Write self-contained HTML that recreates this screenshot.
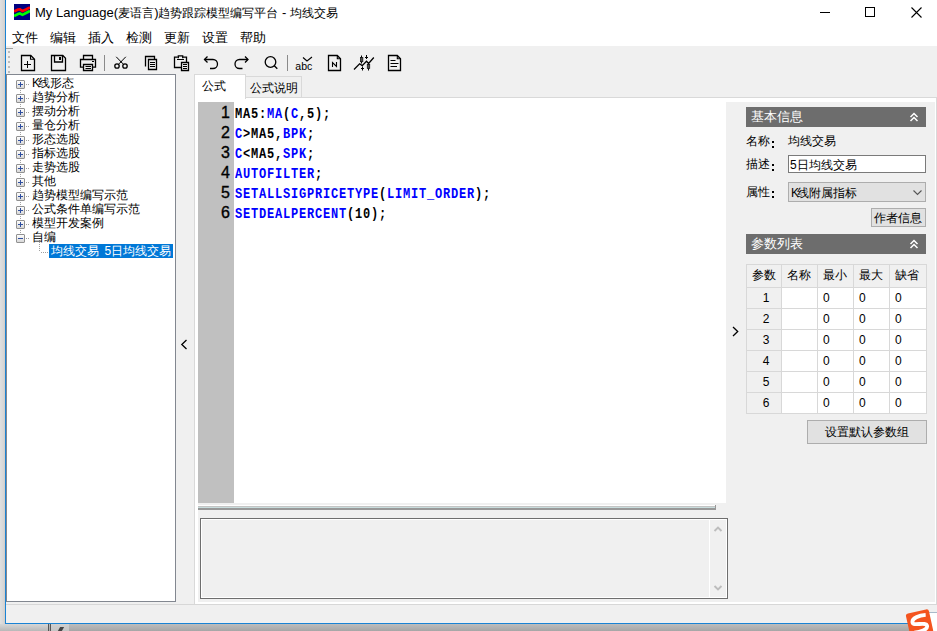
<!DOCTYPE html>
<html><head><meta charset="utf-8">
<style>
*{box-sizing:border-box;margin:0;padding:0}
html,body{width:937px;height:631px;overflow:hidden;background:#a8a8a8;font-family:"Liberation Sans",sans-serif;font-size:12px;color:#000}
.a{position:absolute}
.mi{position:absolute;top:29px;font-size:13px;line-height:17px;white-space:nowrap}
.ti{position:absolute;left:32px;font-size:12px;line-height:14px;white-space:nowrap}
.box{position:absolute;left:16px;width:9px;height:9px;border:1px solid #919191;background:linear-gradient(#fdfdfd,#d8d8d8);border-radius:1px}
.box:before{content:"";position:absolute;left:1px;top:3px;width:5px;height:1px;background:#2f4fa0}
.box.p:after{content:"";position:absolute;left:3px;top:1px;width:1px;height:5px;background:#2f4fa0}
.ln{position:absolute;left:198px;width:32px;text-align:right;font-size:16px;line-height:20px;-webkit-text-stroke:0.35px #000}
.cl{position:absolute;left:235px;font-family:"Liberation Mono",monospace;font-weight:bold;font-size:15px;letter-spacing:1px;line-height:20px;white-space:pre;transform:scaleX(0.8);transform-origin:0 0}
.k{color:#0000ff}
.hdr{position:absolute;left:746px;width:180px;height:20px;background:#6d6d6d;color:#fff;font-size:12.5px;line-height:20px;padding-left:5px}
.lbl{position:absolute;left:746px;font-size:12px;line-height:14px;white-space:nowrap}
.td{position:absolute;font-size:12px;line-height:14px;white-space:nowrap}
</style></head><body>
<div class="a" style="left:0;top:0;width:5px;height:624px;background:linear-gradient(to right,#e0e0e0,#d2d2d2)"></div>
<div class="a" style="left:4px;top:0;width:1px;height:624px;background:#d6cfc9"></div>
<div class="a" style="left:0;top:624px;width:937px;height:7px;background:linear-gradient(#bdbdbd,#a6a6a6)"></div>
<div class="a" style="left:0;top:624px;width:48px;height:7px;background:linear-gradient(#d6d6d6,#b8b8b8)"></div>
<div class="a" style="left:48px;top:624px;width:1px;height:7px;background:#555"></div>
<div class="a" style="left:50px;top:624px;width:1px;height:7px;background:#555"></div>
<div class="a" style="left:51px;top:624px;width:18px;height:7px;background:linear-gradient(#d0d0d0,#c4c4c4)"></div>
<div class="a" style="left:59px;top:627px;width:4px;height:4px;background:#444;transform:skewX(-30deg)"></div>
<div class="a" style="left:5px;top:0;width:932px;height:624px;background:#f0f0f0;border-left:1px solid #1a83d4;border-bottom:1px solid #1a83d4"></div>
<div class="a" style="left:6px;top:0;width:931px;height:46px;background:#fff"></div>
<svg class="a" style="left:14px;top:4px" width="16" height="16" viewBox="0 0 16 16">
<rect width="16" height="16" fill="#000080"/>
<polyline points="0,7.5 4,5.5 6,5.3 8.5,7 12,5.5 16,3.3" fill="none" stroke="#ff0000" stroke-width="2.6"/>
<polyline points="0,12 4,10 6,9.5 8.5,10.8 12,9 16,7" fill="none" stroke="#00ff00" stroke-width="2.6"/>
</svg>
<div class="a" style="left:35px;top:5px;font-size:13px;line-height:16px;white-space:nowrap">My Language(<span style="font-size:12px">麦语言</span>)<span style="font-size:12px">趋势跟踪模型编写平台</span> - <span style="font-size:12px">均线交易</span></div>
<div class="a" style="left:820px;top:12px;width:10px;height:1px;background:#000"></div>
<div class="a" style="left:865px;top:7px;width:10px;height:10px;border:1px solid #000"></div>
<svg class="a" style="left:911px;top:7px" width="11" height="11" viewBox="0 0 11 11"><path d="M0.5 0.5L10.5 10.5M10.5 0.5L0.5 10.5" stroke="#000" stroke-width="1.1"/></svg>
<div class="mi" style="left:12px">文件</div>
<div class="mi" style="left:50px">编辑</div>
<div class="mi" style="left:88px">插入</div>
<div class="mi" style="left:126px">检测</div>
<div class="mi" style="left:164px">更新</div>
<div class="mi" style="left:202px">设置</div>
<div class="mi" style="left:240px">帮助</div>
<div class="a" style="left:6px;top:48px;width:7px;height:1px;background:#a0a0a0"></div>
<svg class="a" style="left:0;top:46px" width="420" height="28" viewBox="0 46 420 28">
<g fill="#bcbcbc"><rect x="8" y="51" width="2" height="2"/><rect x="8" y="56" width="2" height="2"/><rect x="8" y="61" width="2" height="2"/><rect x="8" y="66" width="2" height="2"/><rect x="8" y="71" width="2" height="2"/></g>
<g fill="none" stroke="#000" stroke-width="1.3" stroke-linejoin="miter">
<path d="M21.5 55.5H30.8L34.5 59.2V70.5H21.5Z"/><path d="M30.5 55.8V59.3H34.2" stroke-width="1.1"/>
<path d="M51.5 55.5H62.8L65.5 58.2V70.5H51.5Z"/><path d="M54.5 55.8V62H62.5V55.8"/>
<path d="M83.5 59.3V55.5H92.5V59.3"/><path d="M83.5 67.2H80.5V59.5H95.5V67.2H92.5"/><path d="M83.5 64.5H92.5V70.5H83.5Z"/>
<circle cx="117" cy="66" r="2.2"/><circle cx="125" cy="66" r="2.2"/>
<path d="M145.5 66.5V56.5H154.5V59.2"/><path d="M148.5 59.5H156.5V69.5H148.5Z"/>
<path d="M177.8 57.2H174.5V67.5H181M183 57.2H186.5V62.5"/><path d="M178.3 58.2V55.8H182.7V58.2"/><path d="M181.5 62.5H188.5V70.5H181.5Z"/>
<path d="M207.5 56.5L204.5 59.5L207.5 62.5"/><path d="M204.5 59.5H213A4.5 4.5 0 0 1 213 68.5H210"/>
<path d="M245 56.5L248 59.5L245 62.5"/><path d="M248 59.5H239.5A4.5 4.5 0 0 0 239.5 68.5H242.5"/>
<circle cx="270.5" cy="62" r="5.3"/><path d="M274.3 65.8L277.3 68.8"/>
<path d="M328.5 55.5H337.3L340.5 58.7V70.5H328.5Z"/><path d="M337.3 55.8V58.8H340.2" stroke-width="1.1"/>
<path d="M388.5 55.5H397.3L400.5 58.7V70.5H388.5Z"/><path d="M397.3 55.8V58.8H400.2" stroke-width="1.1"/>
<path d="M354 69.5L359.6 63.8L362.2 65.6L366.5 61.2L368.6 63.5L373.8 57.5"/>
</g>
<g fill="none" stroke="#000" stroke-width="1">
<path d="M27.5 61V68M24 64.5H31"/>
<path d="M85.5 66.5H91M85.5 68.5H91"/>
<path d="M118.3 64.5L125.8 56.8M123.7 64.5L116.2 56.8"/>
<path d="M150 62.5H155M150 64.5H155M150 66.5H155"/>
<path d="M177 59.5H184"/><path d="M183 64.5H187M183 66.5H187M183 68.5H187"/>
<path d="M390.5 60.5H395.5M390.5 63.5H398.5M390.5 66.5H397"/>
<path d="M332.5 67V62.5L336.5 66.5V62" stroke-width="1.1"/>
</g>
<g fill="#000"><rect x="59" y="57" width="2" height="3"/><rect x="92" y="61" width="2" height="1"/><rect x="120.3" y="61.2" width="1.5" height="1.5"/></g>
<rect x="104" y="55" width="1" height="16" fill="#8a8a8a"/>
<rect x="287" y="55" width="1" height="16" fill="#8a8a8a"/>
<text x="295.3" y="69.6" font-family="Liberation Sans" font-size="11" fill="#000" textLength="17" lengthAdjust="spacingAndGlyphs">abc</text>
<path d="M303 57.5L307 61L312 57" fill="none" stroke="#000" stroke-width="1.1"/>
<g stroke="#000" stroke-width="1" fill="none"><path d="M361.5 55.5V63.5M368.5 62.5V70.5M366.5 55V59M365 57.5H368M362.5 66.5V70.5M361 68.5H364"/></g>
<g fill="#505050" stroke="#000" stroke-width="0.6"><rect x="360.3" y="57.5" width="2.6" height="4.3"/><rect x="367.2" y="64.3" width="2.6" height="4.3"/></g>
</svg>
<div class="a" style="left:6px;top:74px;width:170px;height:528px;background:#fff;border:1px solid #828790"></div>
<svg class="a" style="left:0;top:74px" width="176" height="200" viewBox="0 74 176 200"><g fill="#a0a0a0"><rect x="26" y="84" width="1" height="1"/><rect x="28" y="84" width="1" height="1"/><rect x="20" y="90" width="1" height="1"/><rect x="20" y="92" width="1" height="1"/><rect x="20" y="94" width="1" height="1"/><rect x="20" y="96" width="1" height="1"/><rect x="26" y="98" width="1" height="1"/><rect x="28" y="98" width="1" height="1"/><rect x="20" y="104" width="1" height="1"/><rect x="20" y="106" width="1" height="1"/><rect x="20" y="108" width="1" height="1"/><rect x="20" y="110" width="1" height="1"/><rect x="26" y="112" width="1" height="1"/><rect x="28" y="112" width="1" height="1"/><rect x="20" y="118" width="1" height="1"/><rect x="20" y="120" width="1" height="1"/><rect x="20" y="122" width="1" height="1"/><rect x="20" y="124" width="1" height="1"/><rect x="26" y="126" width="1" height="1"/><rect x="28" y="126" width="1" height="1"/><rect x="20" y="132" width="1" height="1"/><rect x="20" y="134" width="1" height="1"/><rect x="20" y="136" width="1" height="1"/><rect x="20" y="138" width="1" height="1"/><rect x="26" y="140" width="1" height="1"/><rect x="28" y="140" width="1" height="1"/><rect x="20" y="146" width="1" height="1"/><rect x="20" y="148" width="1" height="1"/><rect x="20" y="150" width="1" height="1"/><rect x="20" y="152" width="1" height="1"/><rect x="26" y="154" width="1" height="1"/><rect x="28" y="154" width="1" height="1"/><rect x="20" y="160" width="1" height="1"/><rect x="20" y="162" width="1" height="1"/><rect x="20" y="164" width="1" height="1"/><rect x="20" y="166" width="1" height="1"/><rect x="26" y="168" width="1" height="1"/><rect x="28" y="168" width="1" height="1"/><rect x="20" y="174" width="1" height="1"/><rect x="20" y="176" width="1" height="1"/><rect x="20" y="178" width="1" height="1"/><rect x="20" y="180" width="1" height="1"/><rect x="26" y="182" width="1" height="1"/><rect x="28" y="182" width="1" height="1"/><rect x="20" y="188" width="1" height="1"/><rect x="20" y="190" width="1" height="1"/><rect x="20" y="192" width="1" height="1"/><rect x="20" y="194" width="1" height="1"/><rect x="26" y="196" width="1" height="1"/><rect x="28" y="196" width="1" height="1"/><rect x="20" y="202" width="1" height="1"/><rect x="20" y="204" width="1" height="1"/><rect x="20" y="206" width="1" height="1"/><rect x="20" y="208" width="1" height="1"/><rect x="26" y="210" width="1" height="1"/><rect x="28" y="210" width="1" height="1"/><rect x="20" y="216" width="1" height="1"/><rect x="20" y="218" width="1" height="1"/><rect x="20" y="220" width="1" height="1"/><rect x="20" y="222" width="1" height="1"/><rect x="26" y="224" width="1" height="1"/><rect x="28" y="224" width="1" height="1"/><rect x="20" y="230" width="1" height="1"/><rect x="20" y="232" width="1" height="1"/><rect x="20" y="234" width="1" height="1"/><rect x="20" y="236" width="1" height="1"/><rect x="26" y="238" width="1" height="1"/><rect x="28" y="238" width="1" height="1"/><rect x="39" y="238" width="1" height="1"/><rect x="39" y="240" width="1" height="1"/><rect x="39" y="242" width="1" height="1"/><rect x="39" y="244" width="1" height="1"/><rect x="39" y="246" width="1" height="1"/><rect x="39" y="248" width="1" height="1"/><rect x="39" y="250" width="1" height="1"/><rect x="41" y="252" width="1" height="1"/><rect x="43" y="252" width="1" height="1"/><rect x="45" y="252" width="1" height="1"/><rect x="47" y="252" width="1" height="1"/></g></svg>
<div class="box p" style="top:80px"></div>
<div class="ti" style="top:76px"><span style="letter-spacing:-2px">K</span>线形态</div>
<div class="box p" style="top:94px"></div>
<div class="ti" style="top:90px">趋势分析</div>
<div class="box p" style="top:108px"></div>
<div class="ti" style="top:104px">摆动分析</div>
<div class="box p" style="top:122px"></div>
<div class="ti" style="top:118px">量仓分析</div>
<div class="box p" style="top:136px"></div>
<div class="ti" style="top:132px">形态选股</div>
<div class="box p" style="top:150px"></div>
<div class="ti" style="top:146px">指标选股</div>
<div class="box p" style="top:164px"></div>
<div class="ti" style="top:160px">走势选股</div>
<div class="box p" style="top:178px"></div>
<div class="ti" style="top:174px">其他</div>
<div class="box p" style="top:192px"></div>
<div class="ti" style="top:188px">趋势模型编写示范</div>
<div class="box p" style="top:206px"></div>
<div class="ti" style="top:202px">公式条件单编写示范</div>
<div class="box p" style="top:220px"></div>
<div class="ti" style="top:216px">模型开发案例</div>
<div class="box" style="top:234px"></div>
<div class="ti" style="top:230px">自编</div>
<div class="a" style="left:49px;top:244px;width:124px;height:14px;background:#0078d7"></div>
<div class="ti" style="left:51px;top:244px;color:#fff">均线交易<span style="display:inline-block;width:5.5px"></span>5日均线交易</div>
<svg class="a" style="left:180px;top:339px" width="9" height="12" viewBox="0 0 9 12"><path d="M6.5 1L1.8 5.5L6.5 10" fill="none" stroke="#000" stroke-width="1.3"/></svg>
<div class="a" style="left:194px;top:97px;width:743px;height:508px;background:#fff;border:1px solid #d9d9d9"></div>
<div class="a" style="left:245px;top:76px;width:57px;height:22px;background:#f0f0f0;border:1px solid #d9d9d9;border-left:none"></div>
<div class="a" style="left:194px;top:74px;width:52px;height:25px;background:#fff;border:1px solid #d9d9d9;border-bottom:none"></div>
<div class="a" style="left:202px;top:78px;font-size:12px;line-height:16px">公式</div>
<div class="a" style="left:250px;top:80px;font-size:12px;line-height:16px">公式说明</div>
<div class="a" style="left:198px;top:503px;width:737px;height:99px;background:#f0f0f0"></div>
<div class="a" style="left:726px;top:102px;width:209px;height:500px;background:#f0f0f0"></div>
<div class="a" style="left:198px;top:102px;width:36px;height:401px;background:#c0c0c0"></div>
<div class="ln" style="top:103px">1</div>
<div class="ln" style="top:123px">2</div>
<div class="ln" style="top:143px">3</div>
<div class="ln" style="top:163px">4</div>
<div class="ln" style="top:183px">5</div>
<div class="ln" style="top:203px">6</div>
<div class="cl" style="top:105px">MA5:<span class="k">MA</span>(<span class="k">C</span>,5);</div>
<div class="cl" style="top:125px"><span class="k">C</span>&gt;MA5,<span class="k">BPK</span>;</div>
<div class="cl" style="top:145px"><span class="k">C</span>&lt;MA5,<span class="k">SPK</span>;</div>
<div class="cl" style="top:165px"><span class="k">AUTOFILTER</span>;</div>
<div class="cl" style="top:185px"><span class="k">SETALLSIGPRICETYPE</span>(<span class="k">LIMIT_ORDER</span>);</div>
<div class="cl" style="top:205px"><span class="k">SETDEALPERCENT</span>(10);</div>
<svg class="a" style="left:731px;top:326px" width="9" height="12" viewBox="0 0 9 12"><path d="M2 1L6.7 5.5L2 10" fill="none" stroke="#000" stroke-width="1.3"/></svg>
<div class="a" style="left:198px;top:505px;width:518px;height:1px;background:#fff"></div>
<div class="a" style="left:198px;top:506px;width:518px;height:1px;background:#c4c4c4"></div>
<div class="a" style="left:198px;top:507px;width:517px;height:1px;background:#c8dcdc"></div>
<div class="a" style="left:198px;top:508px;width:518px;height:2px;background:#989898"></div>
<div class="a" style="left:715px;top:505px;width:1px;height:5px;background:#989898"></div>
<div class="a" style="left:200px;top:518px;width:528px;height:81px;background:#f0f0f0;border:1px solid #6e6e6e"></div>
<div class="a" style="left:201px;top:519px;width:526px;height:79px;border:1px solid #fff"></div>
<div class="a" style="left:709px;top:519px;width:1px;height:79px;background:#fff"></div>
<svg class="a" style="left:710px;top:520px" width="16" height="76" viewBox="0 0 16 76"><path d="M4.5 11L8 7.5L11.5 11M4.5 66L8 69.5L11.5 66" fill="none" stroke="#bdbdbd" stroke-width="1.9"/></svg>
<div class="hdr" style="top:107px">基本信息</div>
<div class="hdr" style="top:234px">参数列表</div>
<svg class="a" style="left:908px;top:112px" width="12" height="10" viewBox="0 0 12 10"><path d="M2.5 5L6 1.5L9.5 5M2.5 9L6 5.5L9.5 9" fill="none" stroke="#fff" stroke-width="1.5"/></svg>
<svg class="a" style="left:908px;top:239px" width="12" height="10" viewBox="0 0 12 10"><path d="M2.5 5L6 1.5L9.5 5M2.5 9L6 5.5L9.5 9" fill="none" stroke="#fff" stroke-width="1.5"/></svg>
<div class="lbl" style="top:134px">名称</div>
<div class="a" style="left:772px;top:141px;width:2px;height:2px;background:#000;box-shadow:0 5px 0 #000"></div>
<div class="a" style="left:772px;top:164px;width:2px;height:2px;background:#000;box-shadow:0 5px 0 #000"></div>
<div class="a" style="left:772px;top:191px;width:2px;height:2px;background:#000;box-shadow:0 5px 0 #000"></div>
<div class="lbl" style="left:788px;top:134px">均线交易</div>
<div class="lbl" style="top:157px">描述</div>
<div class="a" style="left:788px;top:155px;width:138px;height:18px;background:#fff;border:1px solid #7a7a7a"></div>
<div class="lbl" style="left:790px;top:158px">5日均线交易</div>
<div class="lbl" style="top:185px">属性</div>
<div class="a" style="left:788px;top:182px;width:138px;height:20px;background:#e1e1e1;border:1px solid #adadad"></div>
<div class="lbl" style="left:791px;top:186px"><span style="letter-spacing:-2px">K</span>线附属指标</div>
<svg class="a" style="left:911.5px;top:189px" width="12" height="8" viewBox="0 0 12 8"><path d="M1.5 1.5L5.5 5.5L9.5 1.5" fill="none" stroke="#555" stroke-width="1.1"/></svg>
<div class="a" style="left:871px;top:208px;width:55px;height:19px;background:#e1e1e1;border:1px solid #adadad"></div>
<div class="lbl" style="left:874px;top:211px">作者信息</div>
<div class="a" style="left:746px;top:264px;width:181px;height:150px;background:#d8d8d8"></div>
<div class="a" style="left:747px;top:265px;width:34px;height:22px;background:#f0f0f0"></div>
<div class="a" style="left:782px;top:265px;width:35px;height:22px;background:#f0f0f0"></div>
<div class="a" style="left:818px;top:265px;width:35px;height:22px;background:#f0f0f0"></div>
<div class="a" style="left:854px;top:265px;width:35px;height:22px;background:#f0f0f0"></div>
<div class="a" style="left:890px;top:265px;width:36px;height:22px;background:#f0f0f0"></div>
<div class="a" style="left:747px;top:288px;width:34px;height:20px;background:#f0f0f0"></div>
<div class="a" style="left:782px;top:288px;width:35px;height:20px;background:#fff"></div>
<div class="a" style="left:818px;top:288px;width:35px;height:20px;background:#fff"></div>
<div class="a" style="left:854px;top:288px;width:35px;height:20px;background:#fff"></div>
<div class="a" style="left:890px;top:288px;width:36px;height:20px;background:#fff"></div>
<div class="a" style="left:747px;top:309px;width:34px;height:20px;background:#f0f0f0"></div>
<div class="a" style="left:782px;top:309px;width:35px;height:20px;background:#fff"></div>
<div class="a" style="left:818px;top:309px;width:35px;height:20px;background:#fff"></div>
<div class="a" style="left:854px;top:309px;width:35px;height:20px;background:#fff"></div>
<div class="a" style="left:890px;top:309px;width:36px;height:20px;background:#fff"></div>
<div class="a" style="left:747px;top:330px;width:34px;height:20px;background:#f0f0f0"></div>
<div class="a" style="left:782px;top:330px;width:35px;height:20px;background:#fff"></div>
<div class="a" style="left:818px;top:330px;width:35px;height:20px;background:#fff"></div>
<div class="a" style="left:854px;top:330px;width:35px;height:20px;background:#fff"></div>
<div class="a" style="left:890px;top:330px;width:36px;height:20px;background:#fff"></div>
<div class="a" style="left:747px;top:351px;width:34px;height:20px;background:#f0f0f0"></div>
<div class="a" style="left:782px;top:351px;width:35px;height:20px;background:#fff"></div>
<div class="a" style="left:818px;top:351px;width:35px;height:20px;background:#fff"></div>
<div class="a" style="left:854px;top:351px;width:35px;height:20px;background:#fff"></div>
<div class="a" style="left:890px;top:351px;width:36px;height:20px;background:#fff"></div>
<div class="a" style="left:747px;top:372px;width:34px;height:20px;background:#f0f0f0"></div>
<div class="a" style="left:782px;top:372px;width:35px;height:20px;background:#fff"></div>
<div class="a" style="left:818px;top:372px;width:35px;height:20px;background:#fff"></div>
<div class="a" style="left:854px;top:372px;width:35px;height:20px;background:#fff"></div>
<div class="a" style="left:890px;top:372px;width:36px;height:20px;background:#fff"></div>
<div class="a" style="left:747px;top:393px;width:34px;height:20px;background:#f0f0f0"></div>
<div class="a" style="left:782px;top:393px;width:35px;height:20px;background:#fff"></div>
<div class="a" style="left:818px;top:393px;width:35px;height:20px;background:#fff"></div>
<div class="a" style="left:854px;top:393px;width:35px;height:20px;background:#fff"></div>
<div class="a" style="left:890px;top:393px;width:36px;height:20px;background:#fff"></div>
<div class="td" style="left:752px;top:268px">参数</div>
<div class="td" style="left:787px;top:268px">名称</div>
<div class="td" style="left:823px;top:268px">最小</div>
<div class="td" style="left:859px;top:268px">最大</div>
<div class="td" style="left:895px;top:268px">缺省</div>
<div class="td" style="left:762px;top:291px;width:8px;text-align:center">1</div>
<div class="td" style="left:823px;top:291px">0</div>
<div class="td" style="left:859px;top:291px">0</div>
<div class="td" style="left:895px;top:291px">0</div>
<div class="td" style="left:762px;top:312px;width:8px;text-align:center">2</div>
<div class="td" style="left:823px;top:312px">0</div>
<div class="td" style="left:859px;top:312px">0</div>
<div class="td" style="left:895px;top:312px">0</div>
<div class="td" style="left:762px;top:333px;width:8px;text-align:center">3</div>
<div class="td" style="left:823px;top:333px">0</div>
<div class="td" style="left:859px;top:333px">0</div>
<div class="td" style="left:895px;top:333px">0</div>
<div class="td" style="left:762px;top:354px;width:8px;text-align:center">4</div>
<div class="td" style="left:823px;top:354px">0</div>
<div class="td" style="left:859px;top:354px">0</div>
<div class="td" style="left:895px;top:354px">0</div>
<div class="td" style="left:762px;top:375px;width:8px;text-align:center">5</div>
<div class="td" style="left:823px;top:375px">0</div>
<div class="td" style="left:859px;top:375px">0</div>
<div class="td" style="left:895px;top:375px">0</div>
<div class="td" style="left:762px;top:396px;width:8px;text-align:center">6</div>
<div class="td" style="left:823px;top:396px">0</div>
<div class="td" style="left:859px;top:396px">0</div>
<div class="td" style="left:895px;top:396px">0</div>
<div class="a" style="left:807px;top:420px;width:120px;height:24px;background:#e1e1e1;border:1px solid #adadad"></div>
<div class="lbl" style="left:825px;top:425px">设置默认参数组</div>
<div class="a" style="left:6px;top:604px;width:931px;height:1px;background:#d7d7d7"></div>
<div class="a" style="left:929px;top:612px;width:8px;height:19px;background:#fff;border-top:1px solid #a9b9c9"></div>
<svg class="a" style="left:896px;top:600px" width="41" height="31" viewBox="896 600 41 31">
<g transform="translate(905.5 614) rotate(-12.5)"><rect x="0" y="0" width="23.5" height="24" rx="2.5" fill="#f4541f"/>
<path d="M19.5 5.2C13 4.2 5 5.5 5 9.8C5 14 18.5 11.5 18.5 16.3C18.5 20.3 10 20.8 4.5 20" fill="none" stroke="#fff" stroke-width="3.8" stroke-linecap="butt"/></g></svg>
</body></html>
